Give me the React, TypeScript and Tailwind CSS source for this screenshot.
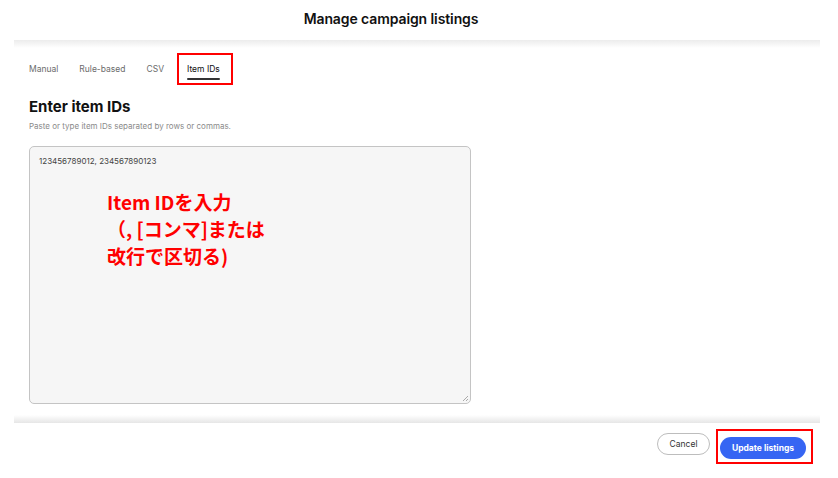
import React from "react";

const sans = { fontFamily: "Inter, 'Open Sans', 'Liberation Sans', sans-serif" };
const jp = { fontFamily: "'Noto Sans CJK JP', 'Noto Sans', sans-serif" };

export default function App() {
  return (
    <div className="w-[838px] h-[478px] bg-white flex flex-col overflow-hidden" style={sans}>
      {/* Header */}
      <div className="h-[40px] flex items-center justify-center pr-[56px] pb-[3px]">
        <h1 className="text-[14px] font-semibold text-[#111] tracking-[-0.1px]">Manage campaign listings</h1>
      </div>
      <div className="mx-[14px] w-[806px] h-[8px] bg-gradient-to-b from-[#ececec] to-white" />

      {/* Body */}
      <div className="flex-1 flex flex-col pl-[29px]">
        {/* Tabs */}
        <div className="flex items-start gap-[21px] mt-[5px] text-[8.5px] text-[#6b6b6b]">
          <span className="pt-[10px]">Manual</span>
          <span className="pt-[10px]">Rule-based</span>
          <span className="pt-[10px]">CSV</span>
          <div className="border-2 border-[#f00] pl-[8px] pr-[11px] pt-[8px] pb-[3px] -ml-[8px]">
            <div className="text-[#111] flex flex-col items-center">
              <span>Item IDs</span>
              <span className="mt-[2px] h-[2px] w-full bg-[#333] rounded" />
            </div>
          </div>
        </div>

        <h2 className="mt-[12px] text-[15px] font-bold text-[#111] leading-[20px]">Enter item IDs</h2>
        <p className="mt-[3px] text-[8px] text-[#8a8a8a]">Paste or type item IDs separated by rows or commas.</p>

        {/* Textarea */}
        <div className="relative mt-[14px] w-[442px] h-[258px] bg-[#f6f6f6] border border-[#c4c4c4] rounded-[5px] px-[9px] pt-[8px]">
          <div className="text-[8px] text-[#444]">123456789012, 234567890123</div>
          <div className="mt-[21px] ml-[68px] text-[19px] font-bold text-[#ff0000] leading-[27px]" style={jp}>
            <div>Item IDを入力</div>
            <div>（, [コンマ]または</div>
            <div>改行で区切る)</div>
          </div>
          <svg className="absolute right-[1px] bottom-[1px]" width="7" height="7" viewBox="0 0 7 7">
            <path d="M6 1L1 6M6 4L4 6" stroke="#aaa" strokeWidth="1" />
          </svg>
        </div>
      </div>

      {/* Footer */}
      <div className="mx-[14px] w-[806px] h-[8px] bg-gradient-to-b from-white to-[#e6e6e6]" />
      <div className="h-[55px] flex items-start justify-end pr-[25px] pt-[6px] gap-[6px]">
        <button className="mt-[4px] h-[22px] w-[53px] rounded-full border border-[#bdbdbd] bg-white text-[8.5px] text-[#333]">
          Cancel
        </button>
        <div className="border-2 border-[#f00] pl-[2px] pr-[5px] pt-[2px] pb-[3px]">
          <button className="h-[22px] w-[86px] rounded-full bg-[#3665f3] text-[8.5px] font-bold text-white">
            Update listings
          </button>
        </div>
      </div>
    </div>
  );
}
